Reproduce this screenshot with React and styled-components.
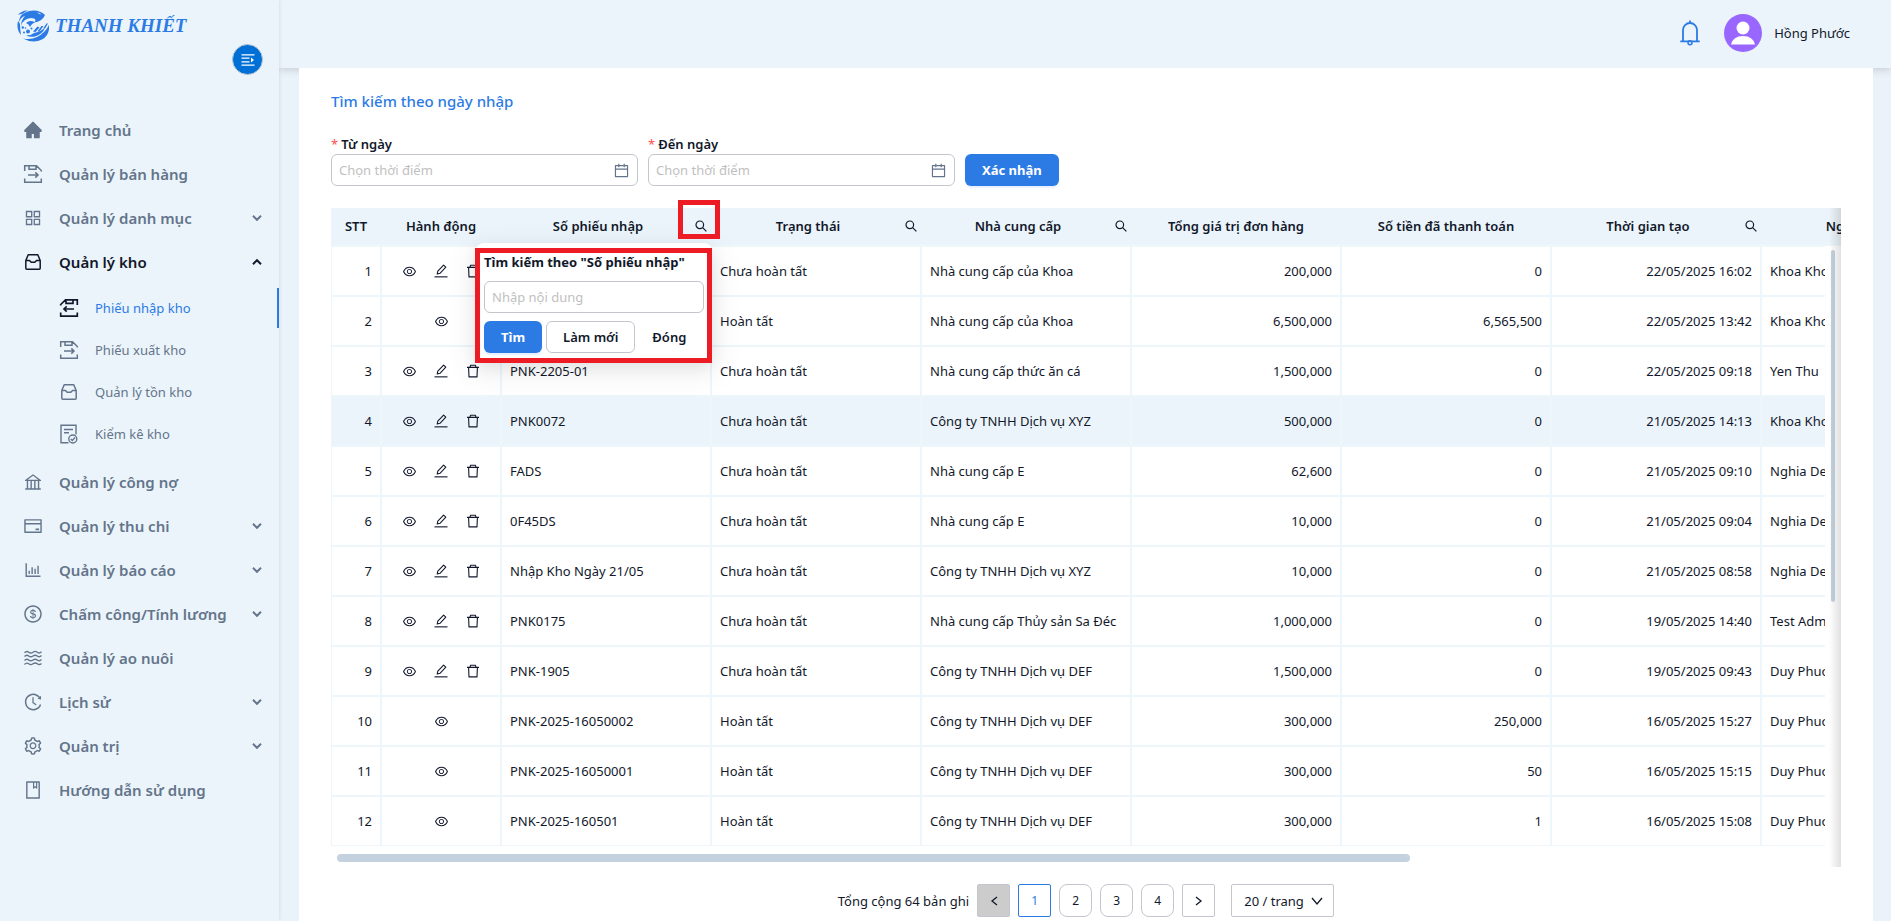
import React, { useRef, useState } from "react";
import styled, { createGlobalStyle, css } from "styled-components";
import {
    AiFillHome,
    AiOutlineAppstore,
    AiOutlineBank,
    AiOutlineBarChart,
    AiOutlineBook,
    AiOutlineCalendar,
    AiOutlineCreditCard,
    AiOutlineDollar,
    AiOutlineEye,
    AiOutlineHistory,
    AiOutlineSetting,
} from "react-icons/ai";

const ExportIcon = ({ size = 20 }) => (
    <svg width={size} height={size} viewBox="0 0 20 20" fill="none" stroke="currentColor" strokeWidth="1.5">
        <path d="M1.7 7V1.8H13.5L18.3 6.5V7.5M6 2V5.3H13V2M5 11H15M12.3 8.4L15 11L12.3 13.6M1.7 14.5V18.2H18.3V14.5" />
    </svg>
);

const ImportIcon = ({ size = 20 }) => (
    <svg width={size} height={size} viewBox="0 0 20 20" fill="none" stroke="currentColor" strokeWidth="1.7">
        <path d="M18.3 7V1.8H6.5L1.7 6.5V7.5M14 2V5.3H7V2M15 11H5M7.7 8.4L5 11L7.7 13.6M18.3 14.5V18.2H1.7V14.5" />
    </svg>
);

const StoreIcon = ({ size = 20 }) => (
    <svg width={size} height={size} viewBox="0 0 20 20" fill="none" stroke="currentColor" strokeWidth="1.5" strokeLinejoin="round">
        <path d="M5.2 2.8H14.8L17.2 8.5V16.2Q17.2 17.2 16.2 17.2H3.8Q2.8 17.2 2.8 16.2V8.5ZM2.8 8.5H6.5L8.2 10.3H11.8L13.5 8.5H17.2" />
    </svg>
);

const CheckListIcon = ({ size = 20 }) => (
    <svg width={size} height={size} viewBox="0 0 20 20" fill="none" stroke="currentColor" strokeWidth="1.4">
        <path d="M9.5 18.8H2V1.2H17V10.5M5 5.5H14M5 8.8H10" />
        <circle cx="13.8" cy="15" r="4" />
        <path d="M11.8 15L13.3 16.5L16 13.6" />
    </svg>
);

const WaveIcon = ({ size = 20 }) => (
    <svg width={size} height={size} viewBox="0 0 20 20" fill="none" stroke="currentColor" strokeWidth="1.4">
        {[4.2, 8, 12, 15.8].map((y) => (
            <path key={y} d={`M1.5 ${y + 0.6}Q3.6 ${y - 1.6} 5.7 ${y}T10 ${y}T14.3 ${y}T18.5 ${y - 0.4}`} />
        ))}
    </svg>
);

const EditIcon = () => (
    <svg width="14" height="14" viewBox="0 0 14 14" fill="none" stroke="currentColor" strokeWidth="1.1" strokeLinejoin="round">
        <path d="M3.2 10L3.8 7.2L9.6 1.1L11.8 3.1L6 9.3Z" />
        <path d="M0.5 12.8H13.5" strokeWidth="1.6" opacity="0.7" />
    </svg>
);

const TrashIcon = () => (
    <svg width="14" height="14" viewBox="0 0 14 14" fill="none" stroke="currentColor" strokeWidth="1.1" strokeLinejoin="round">
        <path d="M1 3.4H13M4 3.2L4.6 1.2H9.4L10 3.2M2.6 3.4L3 12.9H11L11.4 3.4" />
    </svg>
);

const Chevron = ({ up }) => (
    <svg width="12" height="12" viewBox="0 0 12 12" fill="none" stroke="currentColor" strokeWidth="2">
        <path d={up ? "M2 8.2L6 4.2L10 8.2" : "M2 3.8L6 7.8L10 3.8"} />
    </svg>
);

const MagnifierIcon = () => (
    <svg width="12" height="12" viewBox="0 0 12 12" fill="none" stroke="currentColor" strokeWidth="1.2">
        <circle cx="4.8" cy="4.8" r="3.8" />
        <path d="M7.6 7.6L11.4 11.4" />
    </svg>
);

const BellIcon = () => (
    <svg width="20" height="26" viewBox="0 0 20 26" fill="none" stroke="currentColor" strokeWidth="1.8">
        <path d="M10 0.5V3M3 21V10A7 7 0 0 1 17 10V21M0.3 21.3H19.7" />
        <circle cx="10" cy="22.8" r="2" strokeWidth="1.5" />
    </svg>
);

const AvatarIcon = () => (
    <svg width="38" height="38" viewBox="0 0 38 38">
        <circle cx="19" cy="19" r="19" fill="#9966ff" />
        <circle cx="19" cy="14" r="6.5" fill="#fff" />
        <path d="M7 30.5Q9 22 19 22T31 30.5Z" fill="#fff" />
    </svg>
);

const FoldIcon = () => (
    <svg width="14" height="14" viewBox="0 0 14 14" fill="none" stroke="currentColor" strokeWidth="1.2">
        <path d="M0.5 1.8H13.5M0.5 5.2H8.5M0.5 8.8H8.5M0.5 12.2H13.5" />
        <path d="M10 4.6L13 7L10 9.4Z" fill="currentColor" stroke="none" />
    </svg>
);

const LogoMark = () => (
    <svg width="32" height="34" viewBox="0 0 32 34" fill="#2c7be5">
        <path d="M1 6Q5 1 11 1.5Q7 3 5 5.5Q8 3 12 2Q22 0 28 6Q25 13 17 13.5Q20 11 17 9.5Q13 8 8 11Q5 13 4 17Q4 11 8 7Q4 8 2 13Q2 8 6 4.5Q3 5 1 6Z" />
        <path d="M20 3.5Q23 3.5 24.5 5.5Q22 5 20 3.5Z" fill="#ebf4fa" />
        <path d="M9 14Q13 10.5 18 13.5Q15 14 13 18Q12 15 9 14Z" />
        <path d="M1 12Q-1 20 4 26Q3 20 3 15Q2 13 1 12Z" />
        <path d="M32 16Q33 26 25 30.5Q16 35 6 29.5Q14 31 20 28Q28 24 32 16Z" />
        <path d="M28 18.5Q26 25 18 27.5Q13 28.5 9 26.5Q14 26.5 17 24Q23 23 28 18.5Z" />
        <path d="M22.5 18.5L18.5 23L16 22.5L20.5 17.5ZM26.5 17L22.5 22.5L20.5 22.5L24.5 17ZM31 14.5L28 19.5L26.5 19L29.5 14.5Z" />
        <circle cx="11" cy="22.5" r="2" />
        <circle cx="5.8" cy="18.5" r="1.2" />
        <circle cx="14.5" cy="19.5" r="1" />
        <circle cx="8.5" cy="19" r="0.8" />
        <circle cx="7" cy="23.5" r="1" />
    </svg>
);

const menu = [
    { label: "Trang chủ", icon: AiFillHome },
    { label: "Quản lý bán hàng", icon: ExportIcon },
    { label: "Quản lý danh mục", icon: AiOutlineAppstore, expandable: true },
    {
        label: "Quản lý kho",
        icon: StoreIcon,
        expandable: true,
        children: [
            { label: "Phiếu nhập kho", icon: ImportIcon },
            { label: "Phiếu xuất kho", icon: ExportIcon },
            { label: "Quản lý tồn kho", icon: StoreIcon },
            { label: "Kiểm kê kho", icon: CheckListIcon },
        ],
    },
    { label: "Quản lý công nợ", icon: AiOutlineBank },
    { label: "Quản lý thu chi", icon: AiOutlineCreditCard, expandable: true },
    { label: "Quản lý báo cáo", icon: AiOutlineBarChart, expandable: true },
    { label: "Chấm công/Tính lương", icon: AiOutlineDollar, expandable: true },
    { label: "Quản lý ao nuôi", icon: WaveIcon },
    { label: "Lịch sử", icon: AiOutlineHistory, expandable: true },
    { label: "Quản trị", icon: AiOutlineSetting, expandable: true },
    { label: "Hướng dẫn sử dụng", icon: AiOutlineBook },
];

const columns = [
    { title: "STT", width: 50 },
    { title: "Hành động", width: 120 },
    { title: "Số phiếu nhập", width: 210, search: true },
    { title: "Trạng thái", width: 210, search: true },
    { title: "Nhà cung cấp", width: 210, search: true },
    { title: "Tổng giá trị đơn hàng", width: 210 },
    { title: "Số tiền đã thanh toán", width: 210 },
    { title: "Thời gian tạo", width: 210, search: true },
    { title: "Người tạo", width: 210, search: true },
];

const DRAFT = "Chưa hoàn tất";
const DONE = "Hoàn tất";

const receipts = [
    ["", DRAFT, "Nhà cung cấp của Khoa", "200,000", "0", "22/05/2025 16:02", "Khoa Khoa"],
    ["", DONE, "Nhà cung cấp của Khoa", "6,500,000", "6,565,500", "22/05/2025 13:42", "Khoa Khoa"],
    ["PNK-2205-01", DRAFT, "Nhà cung cấp thức ăn cá", "1,500,000", "0", "22/05/2025 09:18", "Yen Thu"],
    ["PNK0072", DRAFT, "Công ty TNHH Dịch vụ XYZ", "500,000", "0", "21/05/2025 14:13", "Khoa Khoa"],
    ["FADS", DRAFT, "Nhà cung cấp E", "62,600", "0", "21/05/2025 09:10", "Nghia Demo"],
    ["0F45DS", DRAFT, "Nhà cung cấp E", "10,000", "0", "21/05/2025 09:04", "Nghia Demo"],
    ["Nhập Kho Ngày 21/05", DRAFT, "Công ty TNHH Dịch vụ XYZ", "10,000", "0", "21/05/2025 08:58", "Nghia Demo"],
    ["PNK0175", DRAFT, "Nhà cung cấp Thủy sản Sa Đéc", "1,000,000", "0", "19/05/2025 14:40", "Test Admin"],
    ["PNK-1905", DRAFT, "Công ty TNHH Dịch vụ DEF", "1,500,000", "0", "19/05/2025 09:43", "Duy Phuoc"],
    ["PNK-2025-16050002", DONE, "Công ty TNHH Dịch vụ DEF", "300,000", "250,000", "16/05/2025 15:27", "Duy Phuoc"],
    ["PNK-2025-16050001", DONE, "Công ty TNHH Dịch vụ DEF", "300,000", "50", "16/05/2025 15:15", "Duy Phuoc"],
    ["PNK-2025-160501", DONE, "Công ty TNHH Dịch vụ DEF", "300,000", "1", "16/05/2025 15:08", "Duy Phuoc"],
];

function Sidebar() {
    return (
        <SidebarBox>
            <Logo href="#">
                <LogoMark />
                <LogoText>THANH KHIẾT</LogoText>
            </Logo>
            <FoldButton aria-label="Thu gọn menu"><FoldIcon /></FoldButton>

            <Nav>
                {menu.map(({ label, icon: Icon, expandable, children }) => (
                    <li key={label}>
                        <MenuLink href="#" $open={!!children}>
                            <Icon size={20} />
                            <MenuLabel>{label}</MenuLabel>
                            {expandable && <Chevron up={!!children} />}
                        </MenuLink>
                        {children && (
                            <SubNav>
                                {children.map(({ label, icon: SubIcon }, index) => (
                                    <li key={label}>
                                        <SubLink href="#" $active={index === 0}>
                                            <SubIcon size={20} />
                                            <span>{label}</span>
                                        </SubLink>
                                    </li>
                                ))}
                            </SubNav>
                        )}
                    </li>
                ))}
            </Nav>
        </SidebarBox>
    );
}

function DateField({ id, label }) {
    return (
        <Field>
            <FieldLabel htmlFor={id}><Required>*</Required>{label}</FieldLabel>
            <DateBox>
                <DateInput id={id} type="text" placeholder="Chọn thời điểm" />
                <AiOutlineCalendar size={17} />
            </DateBox>
        </Field>
    );
}

function SearchPopup({ onClose }) {
    return (
        <Popup>
            <PopupTitle htmlFor="receipt-code">Tìm kiếm theo "Số phiếu nhập"</PopupTitle>
            <PopupInput id="receipt-code" type="text" placeholder="Nhập nội dung" />
            <PopupActions>
                <Button $variant="primary">Tìm</Button>
                <Button $variant="outline">Làm mới</Button>
                <Button $variant="text" onClick={onClose}>Đóng</Button>
            </PopupActions>
        </Popup>
    );
}

function Columns() {
    return (
        <colgroup>
            {columns.map(({ title, width }) => <col key={title} width={width} />)}
        </colgroup>
    );
}

function ReceiptTable() {
    const [showSearch, setShowSearch] = useState(true);
    const headRef = useRef(null);

    const syncHead = (event) => {
        headRef.current.scrollLeft = event.target.scrollLeft;
    }

    return (
        <TableArea>
            <TableHead ref={headRef}>
                <Table>
                    <Columns />
                    <thead>
                        <tr>
                            {columns.map(({ title, search }) => (
                                <Th key={title}>
                                    <ThContent>
                                        <ThTitle>{title}</ThTitle>
                                        {search && (
                                            <SearchButton aria-label={`Tìm ${title}`} onClick={() => setShowSearch(true)}>
                                                <MagnifierIcon />
                                            </SearchButton>
                                        )}
                                    </ThContent>
                                </Th>
                            ))}
                        </tr>
                    </thead>
                </Table>
            </TableHead>

            <BodyRow>
                <TableBody onScroll={syncHead}>
                    <Table>
                        <Columns />
                        <tbody>
                            {receipts.map(([code, status, supplier, total, paid, time, user], index) => (
                                <Tr key={time} $highlight={index === 3}>
                                    <Td $align="right">{index + 1}</Td>
                                    <Td>
                                        <Actions>
                                            <IconButton aria-label="Xem"><AiOutlineEye size={15} /></IconButton>
                                            {status === DRAFT && (
                                                <>
                                                    <IconButton aria-label="Sửa"><EditIcon /></IconButton>
                                                    <IconButton aria-label="Xóa"><TrashIcon /></IconButton>
                                                </>
                                            )}
                                        </Actions>
                                    </Td>
                                    <Td>{code}</Td>
                                    <Td>{status}</Td>
                                    <Td>{supplier}</Td>
                                    <Td $align="right">{total}</Td>
                                    <Td $align="right">{paid}</Td>
                                    <Td $align="right">{time}</Td>
                                    <Td>{user}</Td>
                                </Tr>
                            ))}
                        </tbody>
                    </Table>
                </TableBody>
                <ScrollTrack><ScrollThumb /></ScrollTrack>
            </BodyRow>
            <ScrollBar><ScrollBarThumb /></ScrollBar>
            <EdgeShadow />

            {showSearch && <SearchPopup onClose={() => setShowSearch(false)} />}
            <IconMark />
            <PopupMark />
        </TableArea>
    );
}

function Pagination() {
    return (
        <Pager>
            <span>Tổng cộng 64 bản ghi</span>
            <PageButton $square disabled aria-label="Trang trước">
                <PagerArrow d="M9 2L4 6L9 10" />
            </PageButton>
            <PageButton $square $current>1</PageButton>
            <PageButton>2</PageButton>
            <PageButton>3</PageButton>
            <PageButton>4</PageButton>
            <PageButton $square aria-label="Trang sau">
                <PagerArrow d="M3 2L8 6L3 10" />
            </PageButton>
            <SizeBox>
                <SizeSelect aria-label="Số bản ghi mỗi trang" defaultValue="20">
                    <option value="20">20 / trang</option>
                    <option value="50">50 / trang</option>
                </SizeSelect>
                <PagerArrow d="M1 3L6 9L11 3" />
            </SizeBox>
        </Pager>
    );
}

const PagerArrow = ({ d }) => (
    <svg width="12" height="12" viewBox="0 0 12 12" fill="none" stroke="currentColor" strokeWidth="1.3">
        <path d={d} />
    </svg>
);

function App() {
    return (
        <>
            <GlobalStyle />
            <Layout>
                <Sidebar />
                <Main>
                    <Header>
                        <BellButton aria-label="Thông báo"><BellIcon /></BellButton>
                        <AvatarIcon />
                        <span>Hồng Phước</span>
                    </Header>
                    <Card>
                        <CardTitle>Tìm kiếm theo ngày nhập</CardTitle>
                        <Filters>
                            <DateField id="from-date" label="Từ ngày" />
                            <DateField id="to-date" label="Đến ngày" />
                            <Button $variant="primary">Xác nhận</Button>
                        </Filters>
                        <ReceiptTable />
                        <Pagination />
                    </Card>
                </Main>
            </Layout>
        </>
    );
}

const GlobalStyle = createGlobalStyle`
    * {
        box-sizing: border-box;
    }

    body {
        margin: 0;
        background: #eaf2fa;
        color: #12182b;
        font-family: "Noto Sans", "Open Sans", sans-serif;
        font-size: 13px;
        line-height: 20px;
    }

    ul {
        list-style: none;
        margin: 0;
        padding: 0;
    }

    a {
        text-decoration: none;
    }

    button, input, select {
        font: inherit;
        color: inherit;
    }

    svg {
        flex-shrink: 0;
    }
`
const Layout = styled.div`
    display: flex;
    height: 100vh;
    overflow: hidden;
`
const SidebarBox = styled.aside`
    display: flex;
    flex-direction: column;
    flex: 0 0 279px;
    background: #ebf4fa;
    box-shadow: 0 0 4px rgba(0, 0, 0, 0.12);
    z-index: 1;
`
const Logo = styled.a`
    display: flex;
    align-items: center;
    gap: 6px;
    height: 44px;
    padding: 8px 0 0 17px;
    color: #2c7be5;
`
const LogoText = styled.span`
    font-family: "Liberation Serif", serif;
    font-size: 19px;
    font-style: italic;
    font-weight: 700;
`
const FoldButton = styled.button`
    display: flex;
    align-items: center;
    justify-content: center;
    align-self: flex-end;
    width: 31px;
    height: 31px;
    margin-right: 16px;
    padding: 0;
    border: 1px solid #b9c4cf;
    border-radius: 50%;
    background: #006fd6;
    color: #fff;
    cursor: pointer;
`
const Nav = styled.ul`
    padding-top: 35px;
`
const MenuLink = styled.a`
    display: flex;
    align-items: center;
    gap: 16px;
    height: 40px;
    margin-bottom: 4px;
    padding: 0 16px 0 23px;
    color: ${({ $open }) => ($open ? "#12182b" : "#64748b")};
    font-size: 15px;
    font-weight: 600;
`
const MenuLabel = styled.span`
    flex: 1;
`
const SubNav = styled.ul`
    display: flex;
    flex-direction: column;
    gap: 2px;
    padding: 2px 0 8px;
`
const SubLink = styled.a`
    display: flex;
    align-items: center;
    gap: 16px;
    height: 40px;
    padding-left: 59px;
    border-right: 2px solid ${({ $active }) => ($active ? "#2c7be5" : "transparent")};
    color: ${({ $active }) => ($active ? "#2c7be5" : "#64748b")};

    svg {
        color: ${({ $active }) => ($active ? "#12182b" : "#64748b")};
    }
`
const Main = styled.main`
    display: flex;
    flex-direction: column;
    flex: 1;
    min-width: 0;
`
const Header = styled.header`
    display: flex;
    align-items: center;
    justify-content: flex-end;
    flex: 0 0 68px;
    padding: 0 41px 2px;
    background: #ebf4fa;
    box-shadow: 0 2px 8px rgba(0, 0, 0, 0.15);

    span {
        margin-left: 12px;
    }
`
const BellButton = styled.button`
    display: flex;
    margin-right: 24px;
    padding: 0;
    border: none;
    background: none;
    color: #2c7be5;
    cursor: pointer;
`
const Card = styled.section`
    flex: 1;
    margin: 0 18px 0 20px;
    padding: 20px 32px 0;
    background: #fff;
`
const CardTitle = styled.h1`
    margin: 0 0 20px;
    color: #2c7be5;
    font-size: 15px;
    font-weight: 500;
    line-height: 26px;
`
const Filters = styled.div`
    display: flex;
    align-items: flex-end;
    gap: 10px;
    margin-bottom: 22px;
`
const Field = styled.div`
    display: flex;
    flex-direction: column;
    flex: 0 1 307px;
`
const FieldLabel = styled.label`
    font-weight: 600;
`
const Required = styled.span`
    margin-right: 3px;
    color: #ff4d4f;
    font-weight: 400;
`
const inputFrame = css`
    height: 32px;
    border: 1px solid #c4c6ce;
    border-radius: 6px;
    background: #fff;
`
const DateBox = styled.div`
    ${inputFrame}
    display: flex;
    align-items: center;
    padding: 0 7px;
    color: #64748b;
`
const DateInput = styled.input`
    flex: 1;
    min-width: 0;
    padding: 0;
    border: none;
    outline: none;

    &::placeholder {
        color: #bfbfbf;
    }
`
const buttonVariants = {
    primary: css`
        padding: 0 17px;
        border: none;
        background: #2c7be5;
        color: #fff;
        font-weight: 700;
        box-shadow: 0 2px 2px rgba(5, 95, 255, 0.1);
    `,
    outline: css`
        padding: 0 16px;
        border: 1px solid #c4c6ce;
        background: #fff;
        font-weight: 600;
    `,
    text: css`
        padding: 0 13px;
        border: none;
        background: none;
        font-weight: 600;
    `,
}
const Button = styled.button`
    height: 32px;
    border-radius: 6px;
    white-space: nowrap;
    cursor: pointer;
    ${({ $variant }) => buttonVariants[$variant]}
`
const TableArea = styled.div`
    position: relative;
    margin-bottom: 17px;
`
const TableHead = styled.div`
    overflow: hidden;
    background: #ebf4fa;
`
const BodyRow = styled.div`
    display: flex;
    height: 602px;
`
const TableBody = styled.div`
    flex: 1;
    min-width: 0;
    overflow: auto;
    scrollbar-width: none;
`
const Table = styled.table`
    width: 1640px;
    table-layout: fixed;
    border-spacing: 0;
`
const Th = styled.th`
    height: 38px;
    padding: 0 8px 2px;
    border-bottom: 1px solid #f0f7fb;
    font-weight: 600;
`
const ThContent = styled.div`
    display: flex;
    align-items: center;
`
const ThTitle = styled.span`
    flex: 1;
    white-space: nowrap;
`
const Tr = styled.tr`
    background: ${({ $highlight }) => ($highlight ? "#ebf4fa" : "#fff")};
`
const Td = styled.td`
    height: 50px;
    padding: 0 8px;
    border: 1px solid #edf6fb;
    text-align: ${({ $align }) => $align || "left"};
    white-space: nowrap;
`
const Actions = styled.div`
    display: flex;
    justify-content: center;
    gap: 16px;
`
const IconButton = styled.button`
    display: flex;
    align-items: center;
    justify-content: center;
    width: 16px;
    height: 16px;
    padding: 0;
    border: none;
    background: none;
    cursor: pointer;
`
const SearchButton = styled(IconButton)`
    margin: 0 -6px 0 6px;
`
const ScrollTrack = styled.div`
    flex: 0 0 16px;
    padding: 4px 6px;
`
const ScrollThumb = styled.div`
    width: 4px;
    height: 352px;
    border-radius: 2px;
    background: #c4d2df;
`
const ScrollBar = styled.div`
    height: 19px;
    padding: 6px 14px 6px 6px;
`
const ScrollBarThumb = styled.div`
    width: 72%;
    height: 8px;
    border-radius: 4px;
    background: #c4d2df;
`
const EdgeShadow = styled.div`
    position: absolute;
    top: 0;
    right: 0;
    bottom: 0;
    width: 12px;
    background: linear-gradient(to right, transparent, rgba(5, 5, 5, 0.12));
    pointer-events: none;
`
const Popup = styled.div`
    position: absolute;
    top: 35px;
    left: 145px;
    display: flex;
    flex-direction: column;
    gap: 8px;
    width: 236px;
    padding: 8px;
    border-radius: 8px;
    background: #fff;
    box-shadow: 0 6px 16px rgba(0, 0, 0, 0.08), 0 9px 28px 8px rgba(0, 0, 0, 0.05);
`
const PopupTitle = styled.label`
    font-weight: 700;
    line-height: 22px;
    white-space: nowrap;
`
const PopupInput = styled.input`
    ${inputFrame}
    padding: 0 7px;

    &::placeholder {
        color: #bfbfbf;
    }
`
const PopupActions = styled.div`
    display: flex;
    gap: 4px;
`
const Mark = styled.div`
    position: absolute;
    border: 5px solid #ed1c24;
    pointer-events: none;
`
const IconMark = styled(Mark)`
    top: -8px;
    left: 347px;
    width: 42px;
    height: 39px;
`
const PopupMark = styled(Mark)`
    top: 40px;
    left: 144px;
    width: 237px;
    height: 115px;
`
const Pager = styled.nav`
    display: flex;
    align-items: center;
    justify-content: center;
    gap: 8px;
`
const PageButton = styled.button`
    display: flex;
    align-items: center;
    justify-content: center;
    width: 33px;
    height: 33px;
    padding: 0;
    border: 1px solid ${({ $current }) => ($current ? "#2c7be5" : "#c4c6ce")};
    border-radius: ${({ $square }) => ($square ? "2px" : "8px")};
    background: #fff;
    color: ${({ $current }) => ($current ? "#2c7be5" : "#12182b")};
    font-size: 12px;
    cursor: pointer;

    &:disabled {
        background: #cccccc;
    }
`
const SizeBox = styled.div`
    display: flex;
    align-items: center;
    width: 103px;
    height: 33px;
    margin-left: 8px;
    padding: 0 10px 0 12px;
    border: 1px solid #c4c6ce;
    border-radius: 2px;
`
const SizeSelect = styled.select`
    flex: 1;
    min-width: 0;
    padding: 0;
    border: none;
    outline: none;
    background: none;
    appearance: none;
`

export default App;
